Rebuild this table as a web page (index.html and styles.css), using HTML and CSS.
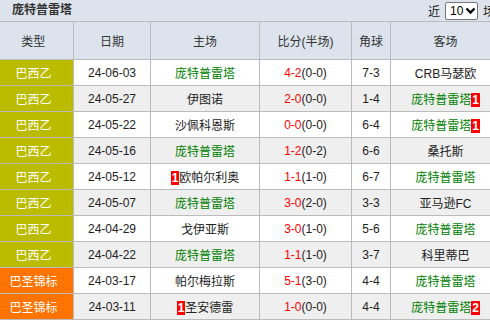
FILE: index.html
```html
<!DOCTYPE html>
<html lang="zh">
<head>
<meta charset="utf-8">
<link rel="stylesheet" href="styles.css">
</head>
<body>
<div class="wrap">
  <div class="titlebar">
    <span class="title">庞特普雷塔</span>
    <span class="near">近 <span class="sel">10<svg width="11" height="9" viewBox="0 0 11 9"><path d="M1.5 2.5 L5.5 6.5 L9.5 2.5" fill="none" stroke="#000" stroke-width="2.4"/></svg></span> 场</span>
  </div>
  <table class="grid">
    <colgroup>
      <col class="c1"><col class="c2"><col class="c3"><col class="c4"><col class="c5"><col class="c6">
    </colgroup>
    <thead>
      <tr><th class="first">类型</th><th>日期</th><th>主场</th><th>比分(半场)</th><th>角球</th><th class="last">客场</th></tr>
    </thead>
    <tbody>
      <tr><td class="lg b">巴西乙</td><td>24-06-03</td><td class="g">庞特普雷塔</td><td><span class="r">4-2</span>(0-0)</td><td>7-3</td><td class="last">CRB马瑟欧</td></tr>
      <tr class="alt"><td class="lg b">巴西乙</td><td>24-05-27</td><td>伊图诺</td><td><span class="r">2-0</span>(0-0)</td><td>1-4</td><td class="last g">庞特普雷塔<span class="card">1</span></td></tr>
      <tr><td class="lg b">巴西乙</td><td>24-05-22</td><td>沙佩科恩斯</td><td><span class="r">0-0</span>(0-0)</td><td>6-4</td><td class="last g">庞特普雷塔<span class="card">1</span></td></tr>
      <tr class="alt"><td class="lg b">巴西乙</td><td>24-05-16</td><td class="g">庞特普雷塔</td><td><span class="r">1-2</span>(0-2)</td><td>6-6</td><td class="last">桑托斯</td></tr>
      <tr><td class="lg b">巴西乙</td><td>24-05-12</td><td><span class="card">1</span>欧帕尔利奥</td><td><span class="r">1-1</span>(1-0)</td><td>6-7</td><td class="last g">庞特普雷塔</td></tr>
      <tr class="alt"><td class="lg b">巴西乙</td><td>24-05-07</td><td class="g">庞特普雷塔</td><td><span class="r">3-0</span>(2-0)</td><td>3-3</td><td class="last">亚马逊FC</td></tr>
      <tr><td class="lg b">巴西乙</td><td>24-04-29</td><td>戈伊亚斯</td><td><span class="r">3-0</span>(1-0)</td><td>5-6</td><td class="last g">庞特普雷塔</td></tr>
      <tr class="alt"><td class="lg b">巴西乙</td><td>24-04-22</td><td class="g">庞特普雷塔</td><td><span class="r">1-1</span>(1-0)</td><td>3-7</td><td class="last">科里蒂巴</td></tr>
      <tr><td class="lg o">巴圣锦标</td><td>24-03-17</td><td>帕尔梅拉斯</td><td><span class="r">5-1</span>(3-0)</td><td>4-4</td><td class="last g">庞特普雷塔</td></tr>
      <tr class="alt"><td class="lg o">巴圣锦标</td><td>24-03-11</td><td><span class="card">1</span>圣安德雷</td><td><span class="r">1-0</span>(0-0)</td><td>4-4</td><td class="last g">庞特普雷塔<span class="card">2</span></td></tr>
    </tbody>
  </table>
</div>
</body>
</html>
```

FILE: styles.css
```css
html, body {
  margin: 0;
  padding: 0;
  overflow: hidden;
  background: #ffffff;
}
body {
  width: 490px;
  height: 320px;
  font-family: "Liberation Sans", "Noto Sans CJK SC", sans-serif;
  font-size: 12px;
  color: #222;
}
.wrap {
  width: 507px;
  margin-left: -7px;
}
.titlebar {
  height: 21px;
  background: #dde3ec;
  border-bottom: 1px solid #bbbbbb;
  display: flex;
  align-items: center;
  justify-content: space-between;
}
.title {
  font-weight: bold;
  font-size: 12px;
  color: #333;
  padding-left: 19px;
  line-height: 21px;
}
.near {
  display: flex;
  align-items: center;
  gap: 5px;
  padding-right: 5px;
  color: #222;
  font-size: 12px;
}
.sel {
  display: inline-flex;
  align-items: center;
  justify-content: space-between;
  width: 26px;
  height: 16px;
  padding: 0 1px 0 4px;
  background: #fff;
  border: 1px solid #767676;
  border-radius: 2px;
  font-size: 12px;
  color: #000;
}
.grid {
  width: 507px;
  border-collapse: collapse;
  table-layout: fixed;
}
.c1 { width: 80px; }
.c2 { width: 77px; }
.c3 { width: 109px; }
.c4 { width: 92px; }
.c5 { width: 39px; }
.c6 { width: 110px; }
th {
  height: 37px;
  background: #dde3ec;
  font-weight: normal;
  color: #333;
  border: 1px solid #bbbbbb;
  border-top: none;
  padding: 0;
  text-align: center;
}
td {
  height: 25px;
  border: 1px solid #bbbbbb;
  padding: 0;
  text-align: center;
  white-space: nowrap;
  color: #222;
}
.alt td { background: #efefef; }
.lg { color: #fff; }
.alt td.b, td.b { background: #bbbb00; }
.alt td.o, td.o { background: #ff7300; }
.g { color: #008000; }
.r { color: #ff0000; }
.card {
  display: inline-block;
  background: #ff0000;
  color: #fff;
  font-weight: bold;
  line-height: 14px;
  padding: 0 1px;
}
.first { border-left: none; }
```
